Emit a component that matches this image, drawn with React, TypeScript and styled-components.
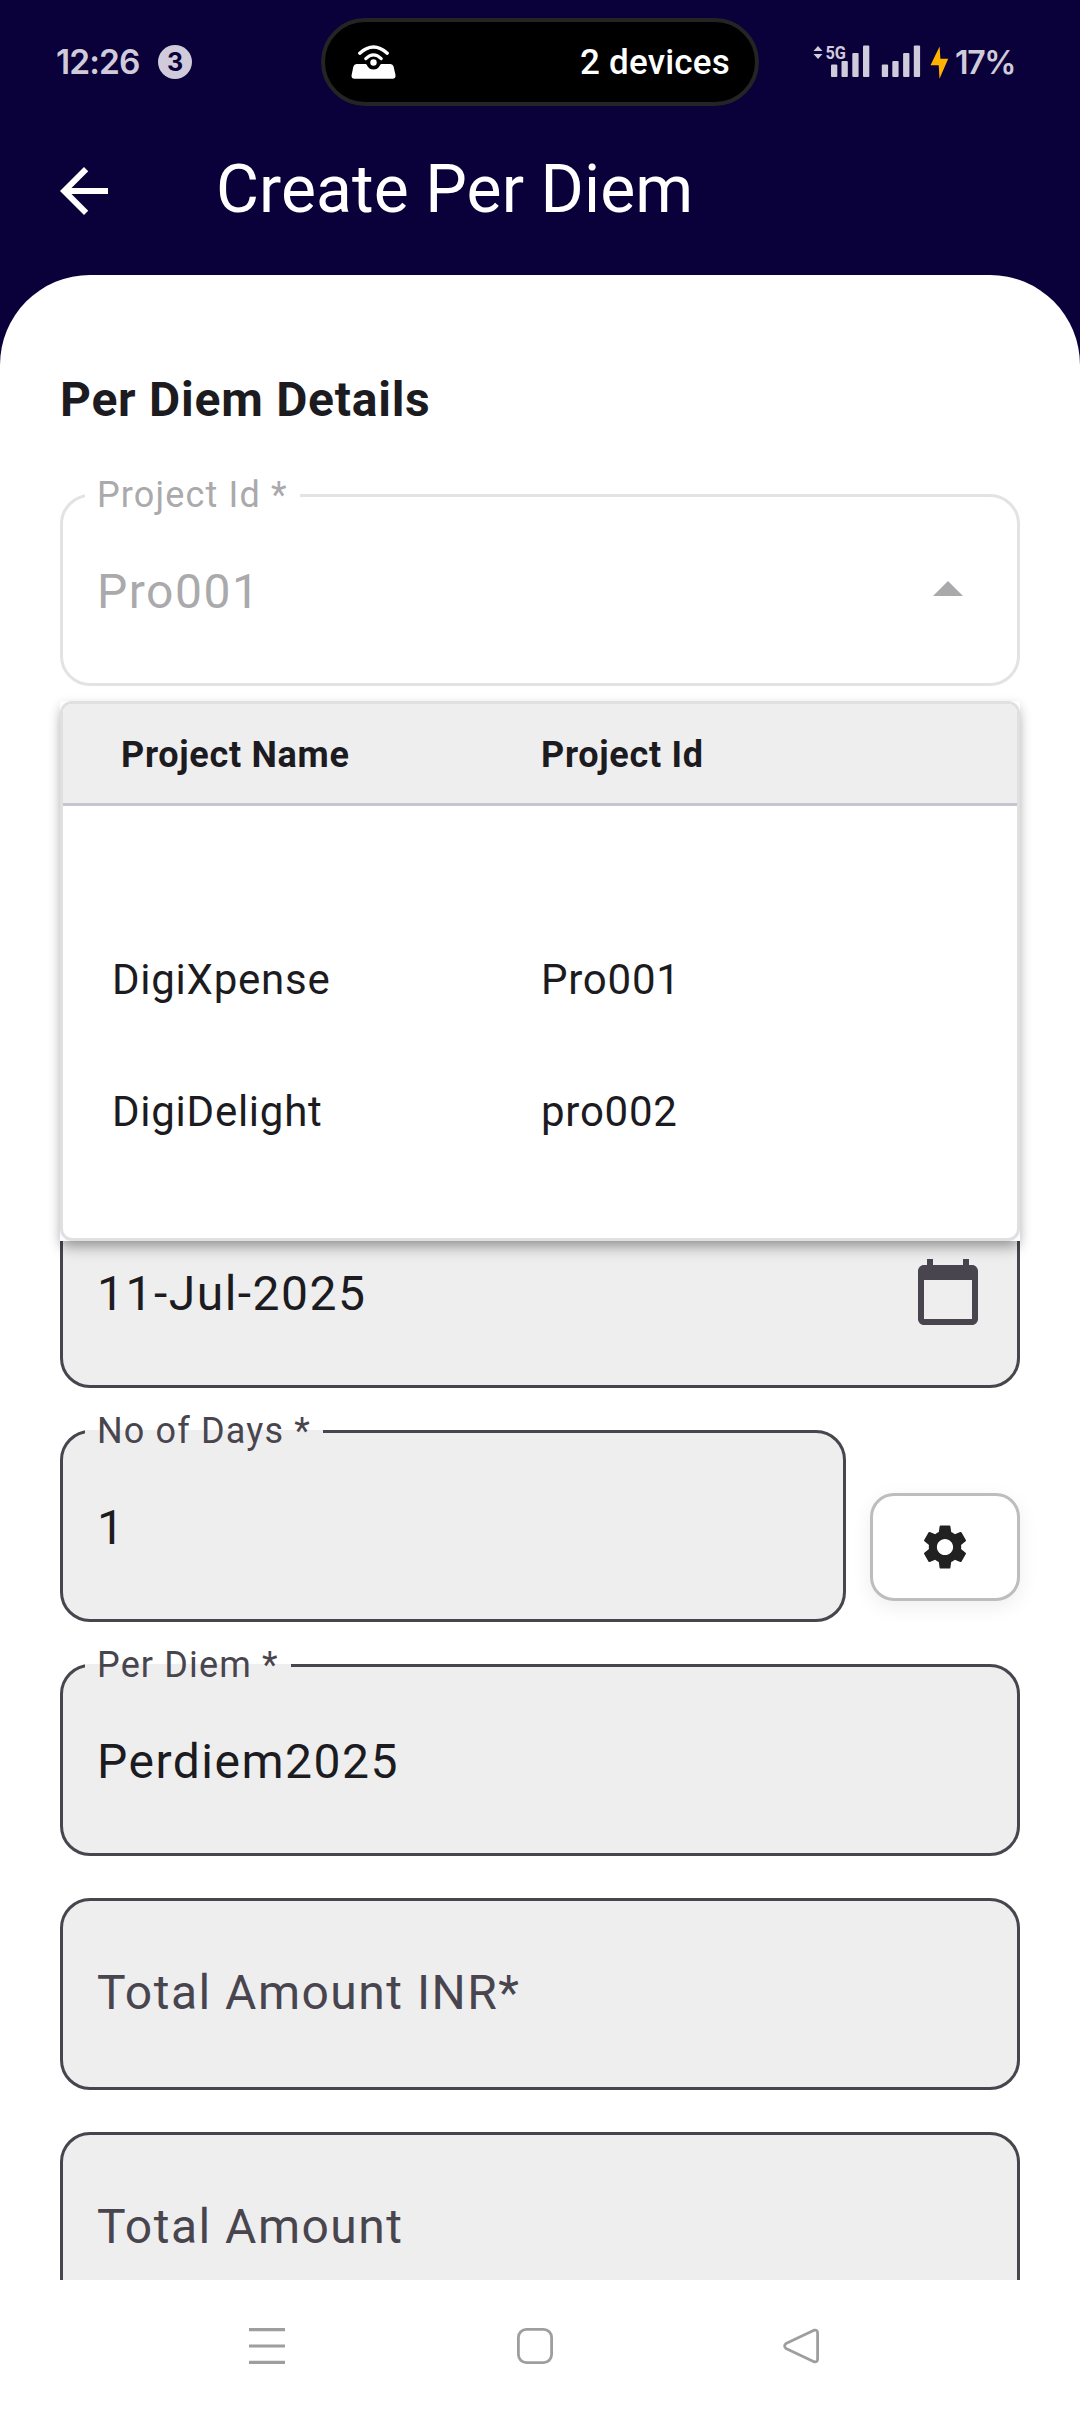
import React from "react";
import styled, { createGlobalStyle } from "styled-components";
import { MdArrowBack, MdArrowDropUp, MdSettings } from "react-icons/md";

const GlobalStyle = createGlobalStyle`
  *, *::before, *::after { box-sizing: border-box; }
  body { margin: 0; background: #fff; font-family: Roboto, "Noto Sans", sans-serif; }
`;

const Screen = styled.div`
  width: 1080px;
  height: 2412px;
  display: flex;
  flex-direction: column;
  overflow: hidden;
  background: #0a003a;
`;

const StatusBar = styled.header`
  height: 107px;
  flex: none;
  display: grid;
  grid-template-columns: 265px 438px 1fr;
  padding: 18px 65px 0 56px;
  color: #cfcbdb;
`;

const StatusGroup = styled.div<{ $end?: boolean }>`
  height: 88px;
  display: flex;
  align-items: center;
  justify-content: ${(p) => (p.$end ? "flex-end" : "flex-start")};
`;

const Clock = styled.span`
  width: 102px;
  font: 600 33.5px/40px Inter, sans-serif;
  letter-spacing: -0.9px;
`;

const Count = styled.span`
  width: 34px;
  height: 34px;
  border-radius: 50%;
  background: #cfcbdb;
  color: #0a003a;
  font: 700 25px/34px Inter, sans-serif;
  text-align: center;
`;

const Island = styled.div`
  height: 88px;
  border: 4px solid #242424;
  border-radius: 44px;
  background: #000;
  color: #fff;
  display: flex;
  align-items: center;
  justify-content: space-between;
  padding: 0 25px 0 26px;
  font-size: 35px;
  font-weight: 500;
  line-height: 42px;
  letter-spacing: 0.2px;
`;

const DeviceCount = styled.span`
  padding-top: 2px;
`;

const Battery = styled.span`
  width: 60px;
  margin-left: 6px;
  padding-top: 2px;
  font: 600 32px/40px Inter, sans-serif;
  letter-spacing: -1.3px;
  white-space: nowrap;
`;

const AppBar = styled.div`
  height: 168px;
  flex: none;
  display: flex;
  align-items: center;
  gap: 96px;
  padding-left: 48px;
  color: #fff;
`;

const Title = styled.h1`
  margin: 0 0 3px;
  font-size: 66px;
  font-weight: 400;
  line-height: 84px;
  letter-spacing: 0.1px;
`;

const Sheet = styled.main`
  flex: 1;
  min-height: 0;
  overflow: hidden;
  background: #fff;
  border-radius: 90px 90px 0 0;
  padding: 89px 60px 0;
`;

const SectionTitle = styled.h2`
  margin: 0;
  height: 130px;
  font-size: 48px;
  font-weight: 700;
  line-height: 72px;
  letter-spacing: 0.75px;
  color: #1c1b1f;
`;

const Form = styled.div`
  display: flex;
  flex-direction: column;
  gap: 42px;
`;

const SelectBox = styled.div`
  position: relative;
  z-index: 1;
`;

const FieldRow = styled.div`
  display: flex;
  align-items: flex-start;
  gap: 24px;
`;

const Outline = styled.fieldset<{ $disabled?: boolean; $labelled: boolean }>`
  min-width: 0;
  width: 100%;
  margin: ${(p) => (p.$labelled ? "-18px 0 0" : "0")};
  padding: 0 33px 0 22px;
  height: ${(p) => (p.$labelled ? "210px" : "192px")};
  flex: none;
  border: 3px solid ${(p) => (p.$disabled ? "#e3e3e4" : "#49454f")};
  border-radius: 30px;
  background: ${(p) => (p.$disabled ? "#fff" : "#eee")};
  color: ${(p) => (p.$disabled ? "#aaa9ab" : "#1c1b1f")};

  ${FieldRow} > & {
    flex: 1;
    width: auto;
  }
`;

const Legend = styled.legend<{ $disabled?: boolean }>`
  height: 39px;
  padding: 0 12px;
  font-size: 36px;
  line-height: 39px;
  letter-spacing: 1.15px;
  color: ${(p) => (p.$disabled ? "#aaa9ab" : "#49454f")};
`;

const Content = styled.div<{ $labelled: boolean }>`
  height: ${(p) => (p.$labelled ? "150px" : "186px")};
  padding-left: 12px;
  display: flex;
  align-items: center;
  justify-content: space-between;
`;

const Value = styled.span`
  padding-top: 3px;
  font-size: 48px;
  line-height: 72px;
  letter-spacing: 1.5px;
`;

const Placeholder = styled(Value)`
  padding: 0 0 3px;
  color: #49454f;
`;

const Menu = styled.div`
  position: absolute;
  top: 207px;
  left: 0;
  right: 0;
  height: 540px;
  background: #fffbfe;
  box-shadow: 0 9px 14px -3px rgba(0, 0, 0, 0.3), 0 3px 10px rgba(0, 0, 0, 0.13);
`;

const MenuTable = styled.div`
  height: 540px;
  border: 3px solid #e0e0e0;
  border-radius: 12px;
  overflow: hidden;
  background: #fff;
  color: #1c1b1f;
`;

const MenuHead = styled.div`
  height: 102px;
  display: grid;
  grid-template-columns: 420px 1fr;
  align-items: center;
  padding: 2px 0 0 58px;
  border-bottom: 3px solid #c9c5d0;
  background: #eee;
  font-size: 36px;
  font-weight: 700;
  line-height: 54px;
  letter-spacing: 0.7px;
`;

const MenuRow = styled.div`
  height: 132px;
  display: grid;
  grid-template-columns: 429px 1fr;
  align-items: center;
  padding-left: 49px;
  font-size: 42px;
  line-height: 60px;
  letter-spacing: 0.75px;
`;

const MenuBody = styled.div`
  padding-top: 108px;
`;

const SettingsButton = styled.button`
  width: 150px;
  height: 108px;
  flex: none;
  margin-top: 63px;
  padding: 0;
  display: flex;
  align-items: center;
  justify-content: center;
  border: 3px solid #bdbdbd;
  border-radius: 24px;
  background: #fff;
  color: #212121;
  box-shadow: 0 6px 20px rgba(0, 0, 0, 0.07);
`;

const NavBar = styled.nav`
  height: 132px;
  flex: none;
  display: flex;
  align-items: center;
  justify-content: space-between;
  padding: 0 261px 0 249px;
  background: #fff;
`;

function HotspotIcon() {
  return (
    <svg width="46" height="36" viewBox="0 0 46 36" fill="none">
      <path d="M8.800 9.200Q22.500-3 36.200 9.200" stroke="#fff" strokeWidth="3.400" strokeLinecap="round" />
      <path d="M14.800 14.600Q22.500 7.200 30.200 14.600" stroke="#fff" strokeWidth="3.200" strokeLinecap="round" />
      <path
        d="M5.500 20H14.500C16.500 20 16.300 25.600 22.500 25.600S28.500 20 30.500 20H39.500Q41.800 20 42.600 22.500L44.500 31Q45 34.700 41.500 34.700H3.500Q0 34.700 .6 31L2.400 22.500Q3.200 20 5.500 20Z"
        fill="#fff"
      />
      <circle cx="22.500" cy="18.500" r="3.200" fill="#fff" />
    </svg>
  );
}

function SignalIcons() {
  const bars = [
    [18, 20, 12.5],
    [28.5, 16.5, 16],
    [39.3, 8.5, 24],
    [50, 1, 31.5],
  ];
  return (
    <svg width="108" height="50" viewBox="0 -8 108 50" fill="#cfcbdb">
      <path d="M.5 6L5 1L9.500 6ZM.5 9L5 14L9.500 9Z" />
      <text x="12.500" y="14" fontSize="19" fontWeight="700" fontFamily="Roboto, sans-serif" textLength="20.500" lengthAdjust="spacingAndGlyphs">
        5G
      </text>
      {[0, 50.8].map((dx) =>
        bars.map(([x, y, h]) => <rect key={`${dx}-${x}`} x={x + dx} y={y - 0.5} width="6.300" height={h} rx="1" />)
      )}
    </svg>
  );
}

function BoltIcon() {
  return (
    <svg width="19" height="34" viewBox="0 0 19 34">
      <path d="M9.600 1.500L.5 20.300H8.700L9.500 33.700L18.200 13.700H10.400Z" fill="#ffb300" />
    </svg>
  );
}

function CalendarIcon() {
  return (
    <svg width="72" height="72" viewBox="0 0 24 24" fill="#49454f">
      <path d="M20 3h-1V1h-2v2H7V1H5v2H4c-1.100 0-2 .9-2 2v16c0 1.100.9 2 2 2h16c1.100 0 2-.9 2-2V5c0-1.100-.9-2-2-2zm0 18H4V8h16v13z" />
    </svg>
  );
}

const StatusIcons = styled.div`
  display: flex;
  align-items: center;
  gap: 9px;
`;

type FieldProps = {
  label?: string;
  value?: string;
  placeholder?: string;
  disabled?: boolean;
  icon?: React.ReactNode;
};

function Field({ label, value, placeholder, disabled, icon }: FieldProps) {
  const labelled = Boolean(label);
  return (
    <Outline $disabled={disabled} $labelled={labelled}>
      {label && <Legend $disabled={disabled}>{label}</Legend>}
      <Content $labelled={labelled}>
        {value && <Value>{value}</Value>}
        {placeholder && <Placeholder>{placeholder}</Placeholder>}
        {icon}
      </Content>
    </Outline>
  );
}

const projects = [
  { name: "DigiXpense", id: "Pro001" },
  { name: "DigiDelight", id: "pro002" },
];

export default function App() {
  return (
    <Screen>
      <GlobalStyle />
      <StatusBar>
        <StatusGroup>
          <Clock>12:26</Clock>
          <Count>3</Count>
        </StatusGroup>
        <Island>
          <HotspotIcon />
          <DeviceCount>2 devices</DeviceCount>
        </Island>
        <StatusGroup $end>
          <StatusIcons>
            <SignalIcons />
            <BoltIcon />
          </StatusIcons>
          <Battery>17%</Battery>
        </StatusGroup>
      </StatusBar>
      <AppBar>
        <MdArrowBack size={72} />
        <Title>Create Per Diem</Title>
      </AppBar>
      <Sheet>
        <SectionTitle>Per Diem Details</SectionTitle>
        <Form>
          <SelectBox>
            <Field label="Project Id *" value="Pro001" disabled icon={<MdArrowDropUp size={72} />} />
            <Menu>
              <MenuTable>
                <MenuHead>
                  <span>Project Name</span>
                  <span>Project Id</span>
                </MenuHead>
                <MenuBody>
                  {projects.map((p) => (
                    <MenuRow key={p.id}>
                      <span>{p.name}</span>
                      <span>{p.id}</span>
                    </MenuRow>
                  ))}
                </MenuBody>
              </MenuTable>
            </Menu>
          </SelectBox>
          <Field />
          <Field />
          <Field value="11-Jul-2025" icon={<CalendarIcon />} />
          <FieldRow>
            <Field label="No of Days *" value="1" />
            <SettingsButton>
              <MdSettings size={54} />
            </SettingsButton>
          </FieldRow>
          <Field label="Per Diem *" value="Perdiem2025" />
          <Field placeholder="Total Amount INR*" />
          <Field placeholder="Total Amount" />
        </Form>
      </Sheet>
      <NavBar>
        <svg width="36" height="36" viewBox="0 0 36 36" fill="none" stroke="#9e9e9e" strokeWidth="3.200">
          <path d="M0 1.600H36M0 18H36M0 34.400H36" />
        </svg>
        <svg width="38" height="36" viewBox="-2 0 38 36" fill="none" stroke="#9e9e9e" strokeWidth="2.800">
          <rect x="1.400" y="1.400" width="33.200" height="33.200" rx="8" />
        </svg>
        <svg width="36" height="36" viewBox="0 0 36 36" fill="none" stroke="#9e9e9e" strokeWidth="2.800" strokeLinejoin="round">
          <path d="M31 2.200L3 15.500Q.2 18 3 20.500L31 33.800Q34.600 34.500 34.600 31V5Q34.600 1.500 31 2.200Z" />
        </svg>
      </NavBar>
    </Screen>
  );
}
